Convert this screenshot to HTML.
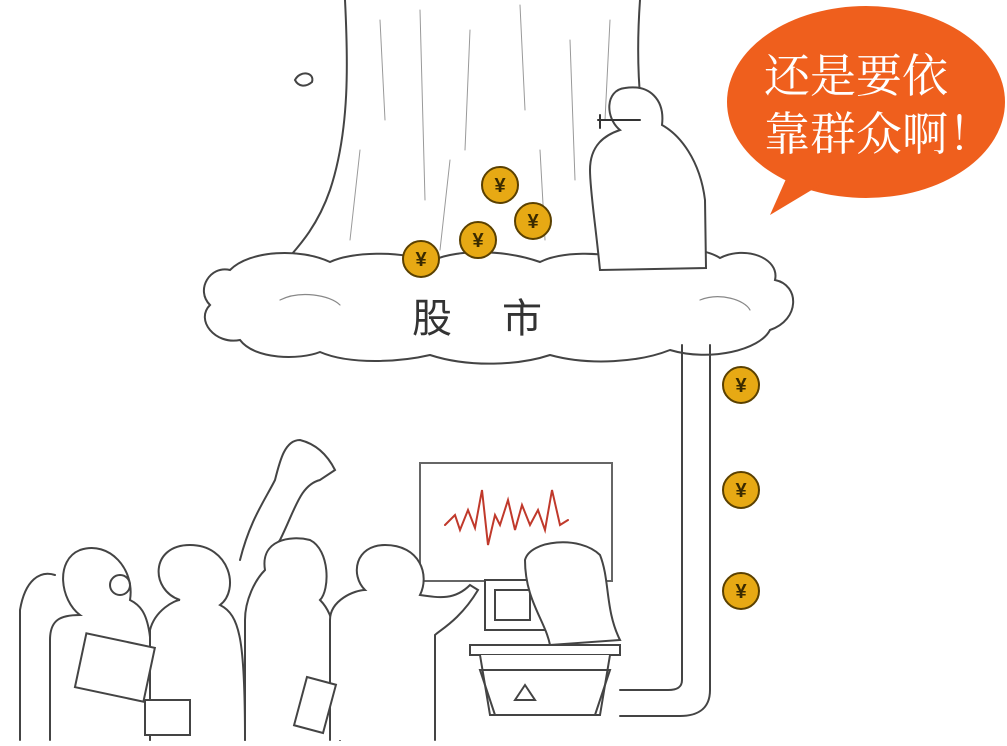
<!DOCTYPE html>
<html><head><meta charset="utf-8"><style>
html,body{margin:0;padding:0;background:#fff;width:1007px;height:746px;overflow:hidden}
svg{display:block}
</style></head><body>
<svg width="1007" height="746" viewBox="0 0 1007 746" xmlns="http://www.w3.org/2000/svg">
<g fill="none" stroke="#444" stroke-width="2" stroke-linecap="round">
<!-- tree trunk -->
<path d="M345 0 C348 60 350 130 330 190 C318 225 300 245 285 262" fill="#fff"/>
<path d="M640 0 C635 70 640 140 660 190 C672 220 690 245 705 262"/>
<path d="M380 20 L385 120 M420 10 L425 200 M470 30 L465 150 M520 5 L525 110 M570 40 L575 180 M610 20 L605 120 M360 150 L350 240 M450 160 L440 250 M540 150 L545 240" stroke="#999" stroke-width="1"/>
<!-- cloud -->
<path d="M230 270 C210 265 195 290 210 305 C195 320 215 345 240 340 C255 360 300 360 320 352 C350 365 400 362 430 355 C470 368 520 365 550 355 C590 366 640 362 670 350 C710 362 760 350 770 330 C800 320 800 285 775 280 C780 258 745 245 720 258 C700 245 660 248 640 262 C600 250 560 252 540 262 C500 248 450 250 430 262 C400 250 350 252 330 262 C300 248 250 250 230 270 Z" fill="#fff"/>
<path d="M280 300 C300 290 330 295 340 305 M700 300 C720 292 745 300 750 310" stroke="#888" stroke-width="1.2"/>
<!-- pipe -->
<path d="M682 345 L682 680 C682 688 676 690 668 690 L620 690" />
<path d="M710 345 L710 690 C710 710 696 716 680 716 L620 716"/>
<!-- man on cloud -->
<path d="M600 270 C595 220 590 190 590 170 C590 145 605 135 620 130 C605 118 605 90 625 88 C650 84 665 100 662 125 C680 135 700 160 705 200 L706 268 Z" fill="#fff"/>
<path d="M598 120 L640 120 M600 115 L600 128" stroke="#333"/>
<!-- board -->
<rect x="420" y="463" width="192" height="118" fill="#fff" stroke="#666"/>
<polyline points="445,525 455,515 460,530 468,510 475,528 482,490 488,545 495,515 500,525 508,500 515,530 522,505 530,525 538,510 545,530 552,490 560,525 568,520" stroke="#c0392b" stroke-width="2" fill="none"/>
<!-- counter -->
<path d="M470 645 L620 645 L620 655 L470 655 Z" fill="#fff"/>
<path d="M480 655 L490 715 L600 715 L610 655" fill="#fff"/>
<path d="M480 670 L610 670 L595 715 L495 715 Z"/>
<path d="M515 700 L525 685 L535 700 Z"/>
<!-- computer -->
<rect x="485" y="580" width="60" height="50" fill="#fff"/>
<rect x="495" y="590" width="35" height="30"/>
<!-- woman cashier -->
<path d="M525 560 C530 540 580 535 600 555 C610 580 605 610 620 640 L550 645 C545 620 525 600 525 560 Z" fill="#fff"/>
<!-- giraffe -->
<path d="M240 560 C250 520 265 500 275 480 C280 460 285 440 300 440 C320 445 330 460 335 470 L320 480 C300 485 295 510 280 540 L265 560" fill="#fff"/>
<!-- people -->
<path d="M50 740 L50 640 C50 620 60 615 80 615 C60 600 55 560 80 550 C110 540 135 570 130 600 C150 610 155 630 150 740" fill="#fff"/>
<circle cx="120" cy="585" r="10"/>
<path d="M150 740 L150 630 C155 610 175 600 180 600 C150 590 150 545 190 545 C230 545 240 590 220 605 C240 615 245 640 245 740" fill="#fff"/>
<path d="M245 740 L245 620 C245 600 255 580 265 570 C260 540 290 535 310 540 C330 550 330 590 320 600 C335 615 340 640 340 740" fill="#fff"/>
<path d="M330 740 L330 620 C330 600 355 590 365 590 C350 575 355 545 385 545 C420 545 430 575 420 595 C440 598 455 600 470 585 L478 590 C460 620 440 630 435 635 L435 740" fill="#fff"/>
<path d="M20 740 L20 610 C25 580 40 570 55 575" />
<rect x="80" y="640" width="70" height="55" fill="#fff" transform="rotate(12 115 667)"/>
<rect x="145" y="700" width="45" height="35" fill="#fff"/>
<rect x="300" y="680" width="30" height="50" fill="#fff" transform="rotate(15 315 705)"/>
<!-- leaf -->
<path d="M295 80 C300 70 315 72 312 82 C305 88 298 86 295 80 Z"/>
</g>
<!-- coins -->
<g stroke="#5a4000" stroke-width="2" fill="#e7a914">
<circle cx="500" cy="185" r="18"/><circle cx="533" cy="221" r="18"/>
<circle cx="478" cy="240" r="18"/><circle cx="421" cy="259" r="18"/>
<circle cx="741" cy="385" r="18"/><circle cx="741" cy="490" r="18"/>
<circle cx="741" cy="591" r="18"/>
</g>
<g fill="#3a2a00" font-family="Liberation Sans, sans-serif" font-size="20" font-weight="bold" text-anchor="middle">
<text x="500" y="192">¥</text><text x="533" y="228">¥</text><text x="478" y="247">¥</text><text x="421" y="266">¥</text>
<text x="741" y="392">¥</text><text x="741" y="497">¥</text><text x="741" y="598">¥</text>
</g>
<text x="412" y="332" font-family="Liberation Sans, 'Noto Sans CJK SC', sans-serif" font-size="40" fill="#333" letter-spacing="50">股市</text>
<!-- speech bubble -->
<ellipse cx="866" cy="102" rx="139" ry="96" fill="#ef5f1d"/>
<path d="M790 170 L770 215 L820 185 Z" fill="#ef5f1d"/>
<g fill="#fff" font-family="'Liberation Serif', 'Noto Serif CJK SC', serif" font-size="46">
<text x="764" y="92">还是要依</text>
<text x="764" y="150">靠群众啊！</text>
</g>
</svg>
</body></html>
